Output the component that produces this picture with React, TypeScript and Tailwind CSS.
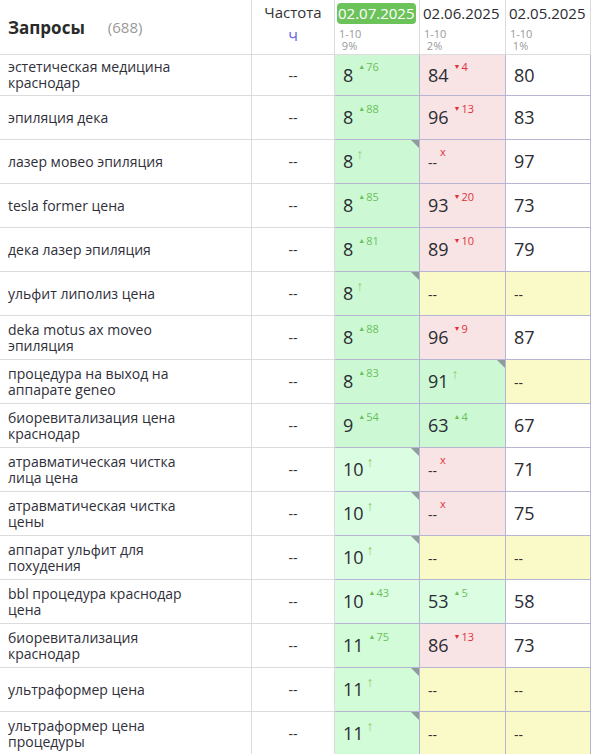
import React from "react";

type Tone = "g" | "g2" | "g3" | "r" | "y" | "w";
type Cell = { v: string; tone: Tone; up?: string; down?: string; isNew?: boolean; lost?: boolean; corner?: boolean };
type Row = { q: string; c: [Cell, Cell, Cell] };

const TONES: Record<Tone, string> = {
  g: "bg-[#ccf9d4]",
  g2: "bg-[#dbfde2]",
  g3: "bg-[#d2fbd8]",
  r: "bg-[#f8e4e4]",
  y: "bg-[#fafac8]",
  w: "bg-white",
};

const ROWS: Row[] = [
  { q: "эстетическая медицина краснодар", c: [{ v: "8", tone: "g", up: "76" }, { v: "84", tone: "r", down: "4" }, { v: "80", tone: "w" }] },
  { q: "эпиляция дека", c: [{ v: "8", tone: "g", up: "88" }, { v: "96", tone: "r", down: "13" }, { v: "83", tone: "w" }] },
  { q: "лазер мовео эпиляция", c: [{ v: "8", tone: "g", isNew: true, corner: true }, { v: "--", tone: "r", lost: true }, { v: "97", tone: "w" }] },
  { q: "tesla former цена", c: [{ v: "8", tone: "g", up: "85" }, { v: "93", tone: "r", down: "20" }, { v: "73", tone: "w" }] },
  { q: "дека лазер эпиляция", c: [{ v: "8", tone: "g", up: "81" }, { v: "89", tone: "r", down: "10" }, { v: "79", tone: "w" }] },
  { q: "ульфит липолиз цена", c: [{ v: "8", tone: "g", isNew: true, corner: true }, { v: "--", tone: "y" }, { v: "--", tone: "y" }] },
  { q: "deka motus ax moveo эпиляция", c: [{ v: "8", tone: "g", up: "88" }, { v: "96", tone: "r", down: "9" }, { v: "87", tone: "w" }] },
  { q: "процедура на выход на аппарате geneo", c: [{ v: "8", tone: "g", up: "83" }, { v: "91", tone: "g", isNew: true, corner: true }, { v: "--", tone: "y" }] },
  { q: "биоревитализация цена краснодар", c: [{ v: "9", tone: "g", up: "54" }, { v: "63", tone: "g", up: "4" }, { v: "67", tone: "w" }] },
  { q: "атравматическая чистка лица цена", c: [{ v: "10", tone: "g2", isNew: true, corner: true }, { v: "--", tone: "r", lost: true }, { v: "71", tone: "w" }] },
  { q: "атравматическая чистка цены", c: [{ v: "10", tone: "g2", isNew: true, corner: true }, { v: "--", tone: "r", lost: true }, { v: "75", tone: "w" }] },
  { q: "аппарат ульфит для похудения", c: [{ v: "10", tone: "g2", isNew: true, corner: true }, { v: "--", tone: "y" }, { v: "--", tone: "y" }] },
  { q: "bbl процедура краснодар цена", c: [{ v: "10", tone: "g2", up: "43" }, { v: "53", tone: "g2", up: "5" }, { v: "58", tone: "w" }] },
  { q: "биоревитализация краснодар", c: [{ v: "11", tone: "g3", up: "75" }, { v: "86", tone: "r", down: "13" }, { v: "73", tone: "w" }] },
  { q: "ультраформер цена", c: [{ v: "11", tone: "g3", isNew: true, corner: true }, { v: "--", tone: "y" }, { v: "--", tone: "y" }] },
  { q: "ультраформер цена процедуры", c: [{ v: "11", tone: "g3", isNew: true, corner: true }, { v: "--", tone: "y" }, { v: "--", tone: "y" }] },
];

const W = ["w-[252px]", "w-[83px]", "w-[85px]", "w-[86px]", "w-[85px]"];

function PosCell({ cell, width }: { cell: Cell; width: string }) {
  const dash = cell.v === "--";
  return (
    <div className={`${width} relative flex shrink-0 items-center border-r border-b border-[#b6b6d2] pl-2 ${TONES[cell.tone]}`}>
      {cell.corner && (
        <div className="absolute top-0 right-0 h-0 w-0 border-t-[8px] border-l-[8px] border-t-[#8f9c9c] border-l-transparent" />
      )}
      <span className={dash ? "pt-[2px] text-[14px] text-[#333]" : "text-[18px] text-[#2b2b33]"}>{cell.v}</span>
      {cell.up && (
        <span className="relative -top-[8px] ml-[5px] flex items-center text-[11px] text-[#6cbf5a]">
          <span className="mr-[1px] text-[7px]">▲</span>
          {cell.up}
        </span>
      )}
      {cell.down && (
        <span className="relative -top-[8px] ml-[5px] flex items-center text-[11px] text-[#e0303a]">
          <span className="mr-[1px] text-[7px]">▼</span>
          {cell.down}
        </span>
      )}
      {cell.isNew && <span className="relative -top-[8px] ml-[3px] text-[14px] text-[#8ccf70]">↑</span>}
      {cell.lost && <span className="relative -top-[9px] ml-[3px] text-[11px] text-[#e0303a]">x</span>}
    </div>
  );
}

export default function App() {
  return (
    <div className="w-[591px] h-[754px] overflow-hidden bg-white font-['Open_Sans',sans-serif] text-[#333]">
      <div className="flex h-[55px] border-b border-[#dcdcdc]">
        <div className={`${W[0]} flex shrink-0 items-center border-r border-[#dcdcdc] pl-2 pt-[1px]`}>
          <span className="text-[17px] font-bold text-[#2a2a2a]">Запросы</span>
          <span className="ml-[23px] text-[15px] text-[#9a9a9a]">(688)</span>
        </div>
        <div className={`${W[1]} flex shrink-0 flex-col items-center border-r border-[#dcdcdc]`}>
          <span className="mt-[1px] text-[15px] leading-[22px]">Частота</span>
          <span className="text-[16px] leading-[24px] text-[#6b6be6]">ч</span>
        </div>
        {["02.07.2025", "02.06.2025", "02.05.2025"].map((d, i) => (
          <div key={d} className={`${W[i + 2]} flex shrink-0 flex-col border-r border-[#dcdcdc] pl-[2px] pt-[3px]`}>
            <span
              className={`w-fit rounded-[4px] px-[1px] text-[15px] leading-[21px] ${
                i === 0 ? "bg-[#6cc35a] text-white" : "text-[#2b2b33]"
              }`}
            >
              {d}
            </span>
            <span className="mt-[4px] whitespace-pre pl-[2px] text-[11px] leading-[12px] text-[#9a9a9a]">
              {"1-10\n\u00a0" + ["9%", "2%", "1%"][i]}
            </span>
          </div>
        ))}
      </div>
      {ROWS.map((r, idx) => (
        <div key={r.q} className={`flex ${idx === 0 ? "h-[41px]" : "h-[44px]"}`}>
          <div className={`${W[0]} flex shrink-0 items-center border-r border-b border-[#dcdcdc] pl-2 pr-[50px]`}>
            <span className="text-[14px] leading-[16px] text-[#2f2f3a]">{r.q}</span>
          </div>
          <div className={`${W[1]} flex shrink-0 items-center justify-center border-r border-b border-[#dcdcdc] text-[14px]`}>
            --
          </div>
          {r.c.map((c, i) => (
            <PosCell key={i} cell={c} width={W[i + 2]} />
          ))}
        </div>
      ))}
    </div>
  );
}
